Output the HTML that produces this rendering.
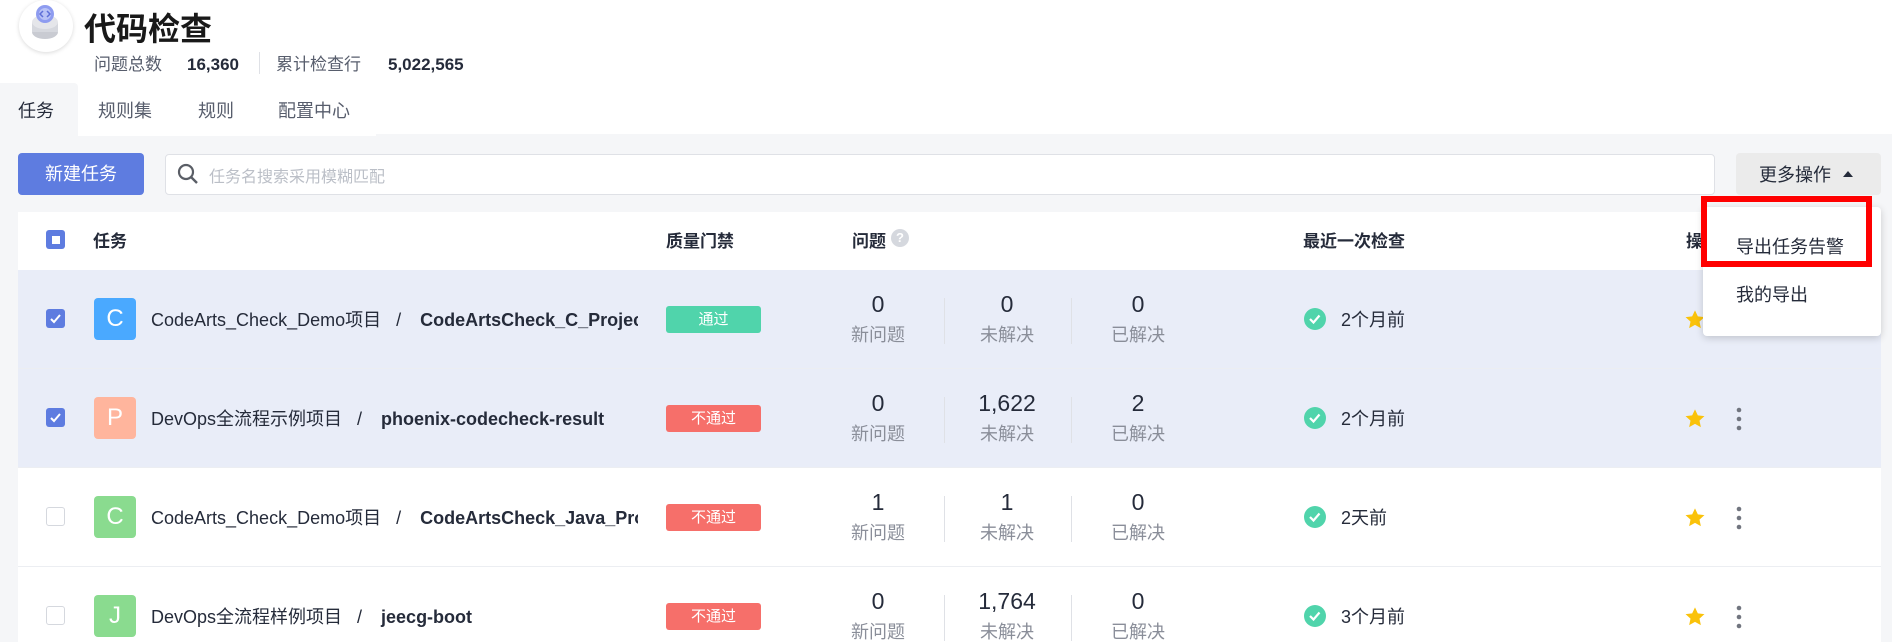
<!DOCTYPE html>
<html><head><meta charset="utf-8">
<style>
*{box-sizing:border-box;margin:0;padding:0}
html,body{overflow:hidden}
body{width:1892px;height:642px;background:#f5f6f8;font-family:"Liberation Sans","Noto Sans CJK SC",sans-serif;color:#252b3a;position:relative}
.a{position:absolute;white-space:nowrap}
.hdr{position:absolute;left:0;top:0;width:1892px;height:136px;background:#fff}
.card{position:absolute;left:18px;top:212px;width:1863px;height:430px;background:#fff}
.row{position:absolute;left:18px;width:1863px;height:99px;border-bottom:1px solid #eceef2}
.sel{background:#e9edf8}
.cb{position:absolute;width:19px;height:19px;border-radius:3px}
.cbon{background:#5e7ce0}
.cboff{border:1px solid #d5d8de;background:#fff}
.av{position:absolute;left:94px;width:42px;height:42px;border-radius:4px;color:#fff;font-size:24px;text-align:center;line-height:42px}
.proj{position:absolute;left:151px;font-size:18px;color:#252b3a;width:487px;overflow:hidden;white-space:nowrap}
.proj b{font-weight:bold;margin-left:4px}
.badge{position:absolute;left:666px;width:95px;height:27px;border-radius:3px;color:#fff;font-size:15px;text-align:center;line-height:27px}
.num{position:absolute;width:120px;text-align:center;font-size:23px;color:#252b3a}
.lab{position:absolute;width:120px;text-align:center;font-size:18px;color:#8a8e99}
.div{position:absolute;width:1px;height:46px;background:#dfe1e6}
.chk{position:absolute;left:1304px;width:22px;height:22px;border-radius:50%;background:#50d4ab}
.tm{position:absolute;left:1341px;font-size:18px}
.stats{position:absolute;left:94px;top:50px;display:flex;align-items:baseline;font-size:17px;white-space:nowrap}
</style></head><body>
<div class="hdr"></div>
<div class="a" style="left:19px;top:0;width:54px;height:52px;border-radius:50%;background:#fff;box-shadow:0 1px 4px rgba(0,0,0,.15)"></div>
<svg class="a" style="left:27px;top:4px" width="40" height="40" viewBox="0 0 40 40">
<ellipse cx="18" cy="28" rx="13" ry="7" fill="#c9cbd2"/>
<rect x="5" y="18" width="26" height="10" fill="#d6d8de"/>
<ellipse cx="18" cy="18" rx="13" ry="7" fill="#e5e6ea"/>
<circle cx="18" cy="10" r="9" fill="#8e9cf0"/>
<circle cx="18" cy="10" r="6" fill="#b9c2f6"/>
<path d="M16 7l-3 3 3 3M20 7l3 3-3 3" stroke="#5e6fd8" stroke-width="1.5" fill="none"/>
</svg>
<div class="a" style="left:84px;top:4px;font-size:32px;font-weight:bold;color:#191919">代码检查</div>
<div class="stats">
<span style="color:#575d6c">问题总数</span>
<span style="font-weight:bold;margin-left:25px">16,360</span>
<span style="display:inline-block;width:1px;height:22px;background:#dfe1e6;margin-left:20px;align-self:center"></span>
<span style="color:#575d6c;margin-left:16px">累计检查行</span>
<span style="font-weight:bold;margin-left:27px">5,022,565</span>
</div>
<div class="a" style="left:0;top:83px;width:78px;height:53px;background:#f5f6f8;border-radius:0 4px 0 0"></div>
<div class="a" style="left:376px;top:134px;width:1516px;height:2px;background:#f5f6f8"></div>
<div class="a" style="left:18px;top:97px;font-size:18px;color:#252b3a">任务</div>
<div class="a" style="left:98px;top:97px;font-size:18px;color:#575d6c">规则集</div>
<div class="a" style="left:198px;top:97px;font-size:18px;color:#575d6c">规则</div>
<div class="a" style="left:278px;top:97px;font-size:18px;color:#575d6c">配置中心</div>
<div class="a" style="left:18px;top:153px;width:126px;height:42px;background:#5e7ce0;border-radius:4px;color:#fff;font-size:18px;text-align:center;line-height:42px">新建任务</div>
<div class="a" style="left:165px;top:154px;width:1550px;height:41px;background:#fff;border:1px solid #dfe1e6;border-radius:4px"></div>
<svg class="a" style="left:177px;top:163px" width="22" height="22" viewBox="0 0 22 22"><circle cx="9" cy="9" r="7" stroke="#5a5e66" stroke-width="2.2" fill="none"/><path d="M14 14l6 6" stroke="#5a5e66" stroke-width="2.4"/></svg>
<div class="a" style="left:209px;top:163px;font-size:16px;color:#bbbfc7">任务名搜索采用模糊匹配</div>
<div class="a" style="left:1736px;top:153px;width:145px;height:42px;background:#ebebeb;border-radius:4px"></div>
<div class="a" style="left:1759px;top:161px;font-size:18px;color:#252b3a">更多操作</div>
<svg class="a" style="left:1843px;top:170px" width="10" height="8"><path d="M0 7L5 1L10 7Z" fill="#252b3a"/></svg>
<div class="card"></div>
<div class="cb cbon" style="left:46px;top:230px"></div>
<div class="a" style="left:52px;top:236px;width:8px;height:8px;background:#fff"></div>
<div class="a" style="left:93px;top:227px;font-size:17px;font-weight:bold">任务</div>
<div class="a" style="left:666px;top:227px;font-size:17px;font-weight:bold">质量门禁</div>
<div class="a" style="left:852px;top:227px;font-size:17px;font-weight:bold">问题</div>
<div class="a" style="left:891px;top:229px;width:18px;height:18px;border-radius:50%;background:#d5d8de;color:#fff;font-size:13px;text-align:center;line-height:18px;font-weight:bold">?</div>
<div class="a" style="left:1303px;top:227px;font-size:17px;font-weight:bold">最近一次检查</div>
<div class="a" style="left:1686px;top:227px;font-size:17px;font-weight:bold">操</div>

<div class="row sel" style="top:270px"></div>
<div class="row sel" style="top:369px"></div>
<div class="row" style="top:468px"></div>
<div class="row" style="top:567px"></div>

<div class="cb cbon" style="left:46px;top:309px"></div>
<svg class="a" style="left:49px;top:312px" width="13" height="13"><path d="M2 7l3 3 6-7" stroke="#fff" stroke-width="2" fill="none"/></svg>
<div class="av" style="top:298px;background:#4aa9ff">C</div>
<div class="proj" style="top:306px">CodeArts_Check_Demo项目&nbsp;&nbsp; / &nbsp;&nbsp;<b>CodeArtsCheck_C_Project</b></div>
<div class="badge" style="top:306px;background:#50d4ab">通过</div>
<div class="num" style="left:818px;top:291px">0</div><div class="lab" style="left:818px;top:321px">新问题</div>
<div class="div" style="left:944px;top:298px"></div>
<div class="num" style="left:947px;top:291px">0</div><div class="lab" style="left:947px;top:321px">未解决</div>
<div class="div" style="left:1071px;top:298px"></div>
<div class="num" style="left:1078px;top:291px">0</div><div class="lab" style="left:1078px;top:321px">已解决</div>
<div class="chk" style="top:308px"></div><svg class="a" style="left:1308px;top:312px" width="14" height="14"><path d="M2 7l3.5 3.5 6-7" stroke="#fff" stroke-width="2.2" fill="none"/></svg>
<div class="tm" style="top:306px">2个月前</div>
<svg class="a" style="left:1684px;top:309px" width="22" height="22" viewBox="0 0 24 24"><path d="M12 1.5l3.1 6.6 7.2.8-5.4 4.9 1.5 7.1L12 17.3l-6.4 3.6 1.5-7.1L1.7 8.9l7.2-.8z" fill="#fac20a"/></svg>

<div class="cb cbon" style="left:46px;top:408px"></div>
<svg class="a" style="left:49px;top:411px" width="13" height="13"><path d="M2 7l3 3 6-7" stroke="#fff" stroke-width="2" fill="none"/></svg>
<div class="av" style="top:397px;background:#ffb59d">P</div>
<div class="proj" style="top:405px">DevOps全流程示例项目&nbsp;&nbsp; / &nbsp;&nbsp;<b>phoenix-codecheck-result</b></div>
<div class="badge" style="top:405px;background:#f66f6a">不通过</div>
<div class="num" style="left:818px;top:390px">0</div><div class="lab" style="left:818px;top:420px">新问题</div>
<div class="div" style="left:944px;top:397px"></div>
<div class="num" style="left:947px;top:390px">1,622</div><div class="lab" style="left:947px;top:420px">未解决</div>
<div class="div" style="left:1071px;top:397px"></div>
<div class="num" style="left:1078px;top:390px">2</div><div class="lab" style="left:1078px;top:420px">已解决</div>
<div class="chk" style="top:407px"></div><svg class="a" style="left:1308px;top:411px" width="14" height="14"><path d="M2 7l3.5 3.5 6-7" stroke="#fff" stroke-width="2.2" fill="none"/></svg>
<div class="tm" style="top:405px">2个月前</div>
<svg class="a" style="left:1684px;top:408px" width="22" height="22" viewBox="0 0 24 24"><path d="M12 1.5l3.1 6.6 7.2.8-5.4 4.9 1.5 7.1L12 17.3l-6.4 3.6 1.5-7.1L1.7 8.9l7.2-.8z" fill="#fac20a"/></svg>
<svg class="a" style="left:1734px;top:407px" width="10" height="24"><circle cx="5" cy="3" r="2.3" fill="#71757f"/><circle cx="5" cy="12" r="2.3" fill="#71757f"/><circle cx="5" cy="21" r="2.3" fill="#71757f"/></svg>

<div class="cb cboff" style="left:46px;top:507px"></div>
<div class="av" style="top:496px;background:#8adb8f">C</div>
<div class="proj" style="top:504px">CodeArts_Check_Demo项目&nbsp;&nbsp; / &nbsp;&nbsp;<b>CodeArtsCheck_Java_Project</b></div>
<div class="badge" style="top:504px;background:#f66f6a">不通过</div>
<div class="num" style="left:818px;top:489px">1</div><div class="lab" style="left:818px;top:519px">新问题</div>
<div class="div" style="left:944px;top:496px"></div>
<div class="num" style="left:947px;top:489px">1</div><div class="lab" style="left:947px;top:519px">未解决</div>
<div class="div" style="left:1071px;top:496px"></div>
<div class="num" style="left:1078px;top:489px">0</div><div class="lab" style="left:1078px;top:519px">已解决</div>
<div class="chk" style="top:506px"></div><svg class="a" style="left:1308px;top:510px" width="14" height="14"><path d="M2 7l3.5 3.5 6-7" stroke="#fff" stroke-width="2.2" fill="none"/></svg>
<div class="tm" style="top:504px">2天前</div>
<svg class="a" style="left:1684px;top:507px" width="22" height="22" viewBox="0 0 24 24"><path d="M12 1.5l3.1 6.6 7.2.8-5.4 4.9 1.5 7.1L12 17.3l-6.4 3.6 1.5-7.1L1.7 8.9l7.2-.8z" fill="#fac20a"/></svg>
<svg class="a" style="left:1734px;top:506px" width="10" height="24"><circle cx="5" cy="3" r="2.3" fill="#71757f"/><circle cx="5" cy="12" r="2.3" fill="#71757f"/><circle cx="5" cy="21" r="2.3" fill="#71757f"/></svg>

<div class="cb cboff" style="left:46px;top:606px"></div>
<div class="av" style="top:595px;background:#8adb8f">J</div>
<div class="proj" style="top:603px">DevOps全流程样例项目&nbsp;&nbsp; / &nbsp;&nbsp;<b>jeecg-boot</b></div>
<div class="badge" style="top:603px;background:#f66f6a">不通过</div>
<div class="num" style="left:818px;top:588px">0</div><div class="lab" style="left:818px;top:618px">新问题</div>
<div class="div" style="left:944px;top:595px"></div>
<div class="num" style="left:947px;top:588px">1,764</div><div class="lab" style="left:947px;top:618px">未解决</div>
<div class="div" style="left:1071px;top:595px"></div>
<div class="num" style="left:1078px;top:588px">0</div><div class="lab" style="left:1078px;top:618px">已解决</div>
<div class="chk" style="top:605px"></div><svg class="a" style="left:1308px;top:609px" width="14" height="14"><path d="M2 7l3.5 3.5 6-7" stroke="#fff" stroke-width="2.2" fill="none"/></svg>
<div class="tm" style="top:603px">3个月前</div>
<svg class="a" style="left:1684px;top:606px" width="22" height="22" viewBox="0 0 24 24"><path d="M12 1.5l3.1 6.6 7.2.8-5.4 4.9 1.5 7.1L12 17.3l-6.4 3.6 1.5-7.1L1.7 8.9l7.2-.8z" fill="#fac20a"/></svg>
<svg class="a" style="left:1734px;top:605px" width="10" height="24"><circle cx="5" cy="3" r="2.3" fill="#71757f"/><circle cx="5" cy="12" r="2.3" fill="#71757f"/><circle cx="5" cy="21" r="2.3" fill="#71757f"/></svg>

<div class="a" style="left:1703px;top:207px;width:178px;height:129px;background:#fff;border-radius:4px;box-shadow:0 2px 8px rgba(0,0,0,.18)"></div>
<div class="a" style="left:1736px;top:233px;font-size:18px;color:#252b3a">导出任务告警</div>
<div class="a" style="left:1736px;top:281px;font-size:18px;color:#252b3a">我的导出</div>
<div class="a" style="left:1701px;top:196px;width:171px;height:71px;border:6px solid #ff0000"></div>
</body></html>
